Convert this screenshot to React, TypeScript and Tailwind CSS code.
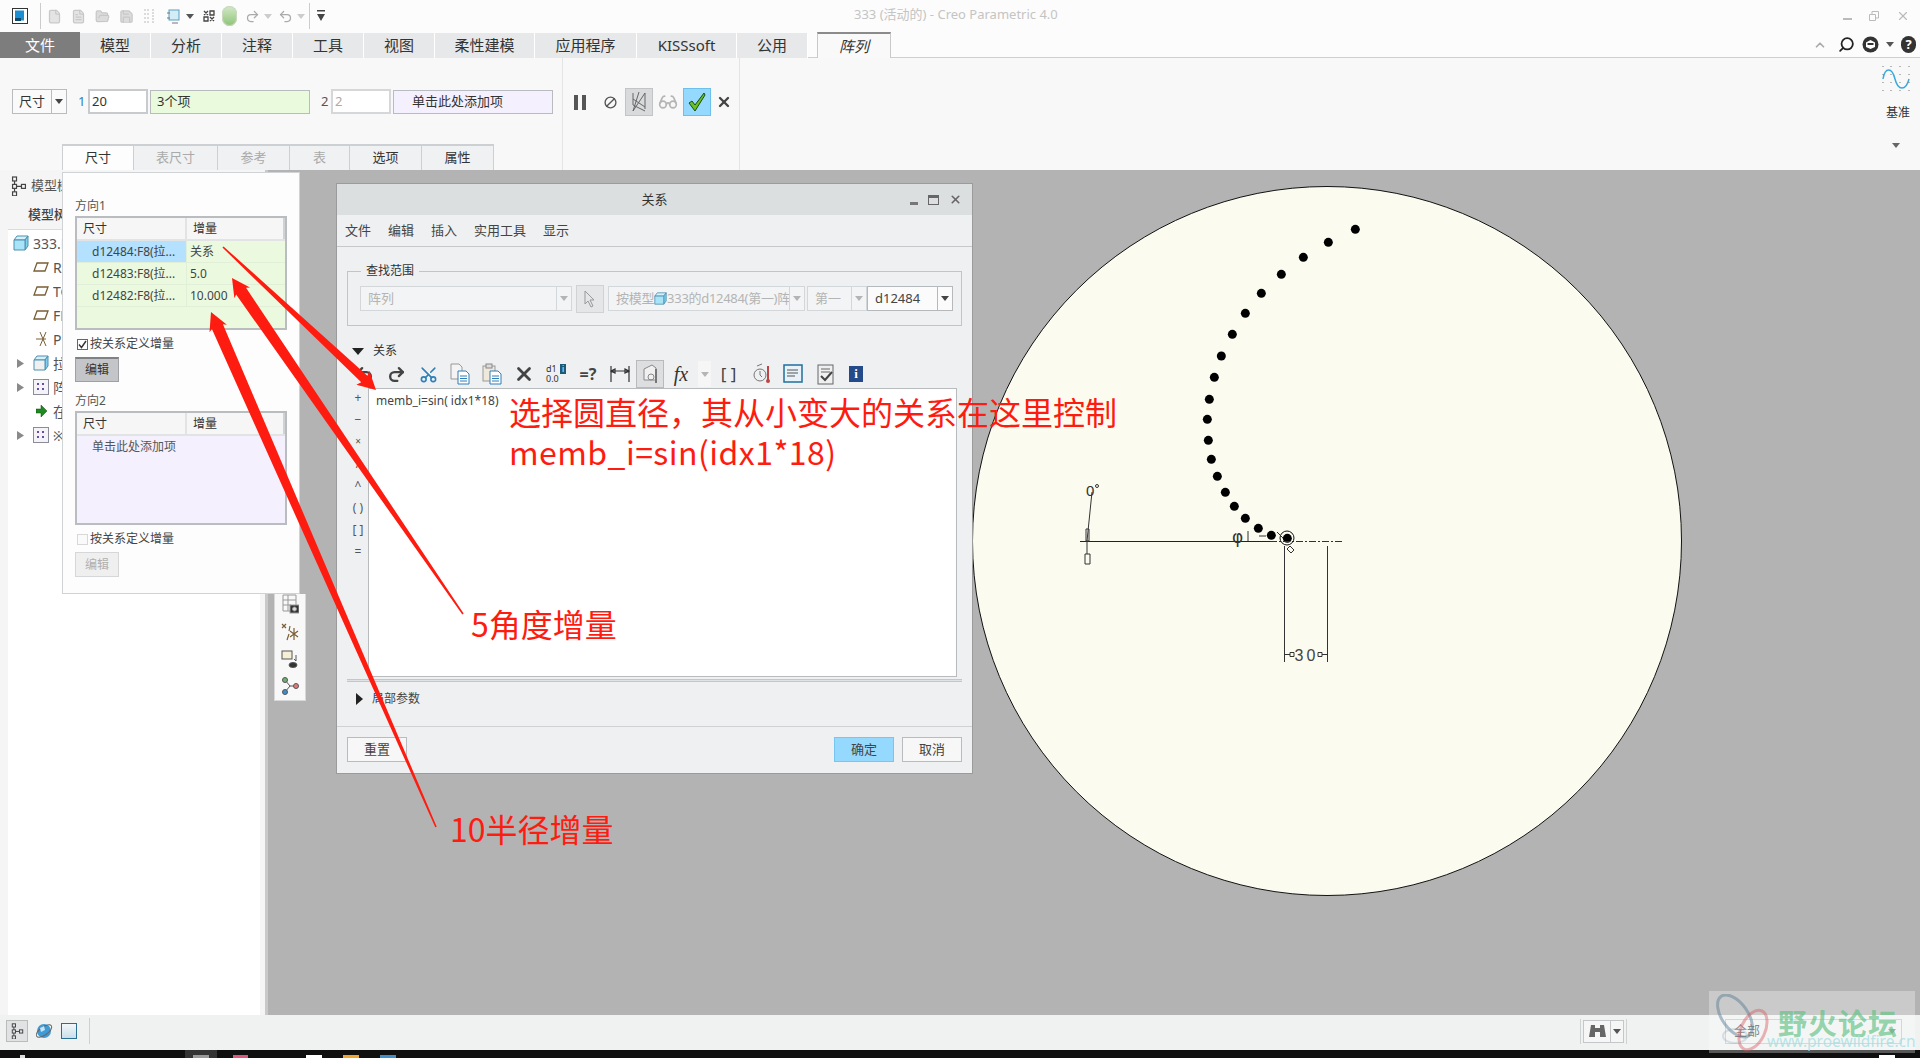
import { ReactNode } from "react";
import {
  Ban,
  ChevronUp,
  File,
  FileText,
  FolderOpen,
  Glasses,
  Redo2,
  Save,
  Scissors,
  Search,
  Undo2,
  X,
} from "lucide-react";

const dots = [
  [886, 88], [805, 127], [730, 172], [664, 223], [604, 280], [556, 340], [517, 403],
  [484, 468], [463, 532], [448, 598], [442, 658], [445, 721], [454, 778], [472, 829],
  [496, 877], [523, 919], [556, 955], [595, 985], [634, 1006], [682, 1015],
];

const tabs = [
  { label: "模型", w: "w-[71px]" },
  { label: "分析", w: "w-[71px]" },
  { label: "注释", w: "w-[71px]" },
  { label: "工具", w: "w-[71px]" },
  { label: "视图", w: "w-[71px]" },
  { label: "柔性建模", w: "w-[100px]" },
  { label: "应用程序", w: "w-[102px]" },
  { label: "KISSsoft", w: "w-[100px]" },
  { label: "公用", w: "w-[71px]" },
];

const subTabs = [
  { label: "尺寸", w: "w-[72px]", state: "active" },
  { label: "表尺寸", w: "w-[84px]", state: "off" },
  { label: "参考", w: "w-[72px]", state: "off" },
  { label: "表", w: "w-[60px]", state: "off" },
  { label: "选项", w: "w-[72px]", state: "on" },
  { label: "属性", w: "w-[72px]", state: "on" },
];

// tapered arrow, tip first then tail
const arrowPoints = (tx: number, ty: number, sx: number, sy: number, head: number, wing: number, neck: number) => {
  const len = Math.hypot(sx - tx, sy - ty);
  const ux = (sx - tx) / len;
  const uy = (sy - ty) / len;
  const nx = -uy;
  const ny = ux;
  const p = (along: number, side: number) => `${tx + ux * along + nx * side},${ty + uy * along + ny * side}`;
  return [p(0, 0), p(head, wing / 2), p(head - 2, neck / 2), p(len, 0.8), p(len, -0.8), p(head - 2, -neck / 2), p(head, -wing / 2)].join(" ");
};

const Tri = ({ className = "" }: { className?: string }) => (
  <svg width="8" height="5" viewBox="0 0 8 5" className={className}>
    <path d="M0 0h8L4 5z" fill="currentColor" />
  </svg>
);

const TreeGlyph = ({ size = 16 }: { size?: number }) => (
  <svg width={size} height={size * 1.3} viewBox="0 0 16 21" fill="none" stroke="#444" strokeWidth="1.2">
    <rect x="1.500" y="1" width="4" height="4" />
    <rect x="1.500" y="8.500" width="4" height="4" />
    <rect x="1.500" y="16" width="4" height="4" />
    <rect x="10.500" y="8.500" width="4" height="4" />
    <path d="M3.500 5v3.500M3.500 12.500V16M5.500 10.500h5" />
  </svg>
);

const PlaneGlyph = () => (
  <svg width="16" height="10" viewBox="0 0 16 10" fill="none" stroke="#7a5f35" strokeWidth="1.3">
    <path d="M4 1h11l-3 8H1z" />
  </svg>
);

const PatternGlyph = () => (
  <svg width="16" height="16" viewBox="0 0 16 16">
    <rect x="0.500" y="0.500" width="15" height="15" fill="#f4f4f8" stroke="#8b8b9a" />
    <path d="M4 4h2v2H4zM9 4h2v2H9zM4 9h2v2H4zM9 9h2v2H9z" fill="#6a4ca0" />
  </svg>
);

const CubeGlyph = ({ solid = false, size = 16 }: { solid?: boolean; size?: number }) => (
  <svg width={size} height={size} viewBox="0 0 16 16" stroke="#4d8fb0" strokeWidth="1" className="shrink-0">
    <path d="M1 5l3-4h11l-3 4z" fill="#d3f0fb" />
    <path d="M12 5l3-4v10l-3 4z" fill="#7fd0ee" />
    <path d="M1 5h11v10H1z" fill={solid ? "#f0f0f0" : "#a9e3f7"} />
  </svg>
);

const DocGlyph = ({ clip = false }: { clip?: boolean }) => (
  <svg width="20" height="22" viewBox="0 0 20 22" fill="none">
    {clip ? (
      <>
        <rect x="1" y="3" width="12" height="15" fill="#efe9dc" stroke="#999" />
        <rect x="4" y="1" width="6" height="4" fill="#ddd" stroke="#888" />
      </>
    ) : (
      <path d="M1 1h8l3 3v12H1z" fill="#f4f4f4" stroke="#999" />
    )}
    <path d="M8 8h8l3 3v10H8z" fill="#fff" stroke="#2f7fb8" />
    <path d="M10 13h7M10 15.500h7M10 18h7" stroke="#2f7fb8" />
  </svg>
);

const TreeRow = ({ icon, text, expand = false }: { icon: ReactNode; text: string; expand?: boolean }) => (
  <div className="flex h-[24px] items-center">
    <div className="flex w-[26px] justify-end pr-[2px]">
      {expand && (
        <svg width="7" height="9" viewBox="0 0 7 9">
          <path d="M0 0l7 4.500L0 9z" fill="#8a8a8a" />
        </svg>
      )}
    </div>
    <div className="ml-[5px] flex w-[20px] justify-center">{icon}</div>
    <span className="ml-[2px] w-[9px] overflow-hidden whitespace-nowrap text-[14px] text-[#555]">{text}</span>
  </div>
);

const Combo = ({ text, w, on = false }: { text: ReactNode; w: string; on?: boolean }) => (
  <div className={`flex h-[25px] ${w} border ${on ? "border-[#b5b9bb] bg-[#fbfbfb] text-[#444]" : "border-[#d4d7d9] bg-[#f3f4f5] text-[#b4b4b4]"} text-[13px]`}>
    <div className="flex min-w-0 flex-1 items-center overflow-hidden whitespace-nowrap pl-[7px]">{text}</div>
    <div className={`flex w-[15px] items-center justify-center border-l ${on ? "border-[#b5b9bb] text-[#444]" : "border-[#d4d7d9] text-[#b4b4b4]"}`}>
      <Tri />
    </div>
  </div>
);

const Dir = ({ title, rows, active }: { title: string; rows: ReactNode; active: boolean }) => (
  <div>
    <div className="h-[16px] text-[12px] leading-[16px] text-[#555]">{title}</div>
    <div className="mt-[2px] h-[114px] w-[212px] border-2 border-[#babdc0]">
      <div className="flex h-[23px] border-b-2 border-[#e1e3e4] bg-[#f6f6f6] text-[12px] leading-[21px] text-[#333]">
        <div className="w-[110px] border-r-2 border-[#e1e3e4] pl-[6px]">尺寸</div>
        <div className="flex-1 pl-[6px]">增量</div>
        <div className="w-[2px] bg-[#d0d2d4]" />
      </div>
      <div className={`h-[87px] ${active ? "bg-[#ebfadf]" : "bg-[#f4f0fe]"} text-[12px] text-[#444]`}>{rows}</div>
    </div>
    <div className="mt-[7px] flex h-[14px] items-center pl-[2px]">
      <span className={`flex h-[11px] w-[11px] items-center justify-center border ${active ? "border-[#666] bg-white" : "border-[#d8d8d8] bg-[#fafafa]"}`}>
        {active && (
          <svg width="9" height="9" viewBox="0 0 9 9" fill="none" stroke="#333" strokeWidth="1.4">
            <path d="M1 4.500l2.500 3L8 1" />
          </svg>
        )}
      </span>
      <span className="ml-[2px] text-[12px] leading-[14px] text-[#444]">按关系定义增量</span>
    </div>
    <div
      className={`mt-[6px] flex h-[25px] w-[44px] items-center justify-center border text-[12px] ${
        active ? "border-[#9fa0a3] border-t-2 border-t-[#808184] bg-[#c4c5c9] text-[#333]" : "border-[#d5d7d9] bg-[#efefef] text-[#b0b0b0]"
      }`}
    >
      编辑
    </div>
  </div>
);

const DimRow = ({ a, b, sel = false }: { a: string; b: string; sel?: boolean }) => (
  <div className="flex h-[22px] border-b border-[#e2efd8] leading-[21px]">
    <div className={`w-[110px] whitespace-nowrap border-r border-[#e2efd8] pl-[15px] ${sel ? "bg-[#b3e1ff]" : ""}`}>{a}</div>
    <div className="pl-[3px]">{b}</div>
  </div>
);

const ToolBtn = ({ children, w = "w-[32px]", active = false }: { children: ReactNode; w?: string; active?: boolean }) => (
  <div className={`flex h-[28px] ${w} shrink-0 items-center justify-center ${active ? "border border-[#b8babc] bg-[#dcdee0]" : ""}`}>{children}</div>
);

const DialogBtn = ({ text, primary = false }: { text: string; primary?: boolean }) => (
  <div className={`flex h-[25px] w-[60px] items-center justify-center border text-[13px] text-[#444] ${primary ? "border-[#77c6f2] bg-[#96d9ff]" : "border-[#b9bcbe] bg-[#f7f7f7]"}`}>
    {text}
  </div>
);

const App = () => {
  return (
    <div className="relative flex h-[1058px] w-[1920px] flex-col overflow-hidden bg-[#b3b3b3] font-['Noto_Sans','Noto_Sans_CJK_SC',sans-serif]">
      {/* title bar */}
      <div className="relative flex h-[32px] shrink-0 items-center bg-[#fcfcfc] pl-[12px]">
        <svg width="16" height="16" viewBox="0 0 16 16">
          <rect x="0.500" y="0.500" width="15" height="15" fill="#fff" stroke="#333" />
          <rect x="3" y="2.500" width="9" height="10" fill="#1b8fd2" />
          <rect x="3" y="10" width="6" height="3" fill="#0c4a70" />
        </svg>
        <div className="ml-[12px] h-[26px] w-px bg-[#ccc]" />
        <div className="ml-[6px] flex items-center gap-[9px] text-[#c8c8c8]">
          <File size={15} fill="#e4e4e4" />
          <FileText size={15} fill="#e4e4e4" />
          <FolderOpen size={15} fill="#dcdcdc" />
          <Save size={15} fill="#dcdcdc" />
          <svg width="14" height="16" viewBox="0 0 14 16" fill="none" stroke="#bbb" strokeDasharray="2 1">
            <path d="M1 2h5M1 6h5M1 10h5M1 14h5M10 1v14" />
          </svg>
          <svg width="16" height="16" viewBox="0 0 16 16" fill="none" stroke="#777">
            <rect x="3" y="2" width="10" height="10" fill="#d4ecf6" stroke="#5a9fc0" />
            <path d="M1 5h3M1 10h3M6 15h6" />
          </svg>
        </div>
        <Tri className="ml-[4px] text-[#555]" />
        <svg width="12" height="12" viewBox="0 0 12 12" className="ml-[9px]" fill="none" stroke="#444" strokeWidth="1.3">
          <path d="M1 1l4 4M5 1L1 5M7 7l4 4M11 7l-4 4M7 1h4v4H7zM1 7h4v4H1z" />
        </svg>
        <span className="ml-[7px] h-[20px] w-[15px] rounded-full bg-gradient-to-b from-[#d5e8ca] to-[#8cc474] shadow-[inset_0_0_0_1px_#c9d8c0]" />
        <Redo2 size={15} className="ml-[8px] text-[#aaa]" />
        <Tri className="ml-[4px] text-[#ccc]" />
        <Undo2 size={15} className="ml-[6px] text-[#aaa]" />
        <Tri className="ml-[4px] text-[#ccc]" />
        <div className="ml-[4px] h-[26px] w-px bg-[#ccc]" />
        <svg width="8" height="12" viewBox="0 0 8 12" className="ml-[7px]">
          <path d="M0 0h8v1.500H0zM0 4h8L4 11z" fill="#444" />
        </svg>
        <span className="absolute left-[854px] top-[5px] whitespace-nowrap text-[13px] text-[#c4c4c4]">333 (活动的) - Creo Parametric 4.0</span>
        <div className="ml-auto flex items-center gap-[16px] pr-[10px] text-[#bbb]">
          <span className="mt-[6px] h-[2px] w-[9px] bg-[#bbb]" />
          <svg width="12" height="12" viewBox="0 0 12 12" fill="none" stroke="#bbb">
            <path d="M1.500 4.500h6v6h-6zM4 4V1.500h6.500V8H8" />
          </svg>
          <X size={14} />
        </div>
      </div>

      {/* ribbon tabs */}
      <div className="flex h-[26px] shrink-0 bg-[#fcfcfc]">
        <div className="flex w-[80px] items-center justify-center bg-[#7d7d7d] text-[15px] text-white">文件</div>
        {tabs.map((t) => (
          <div key={t.label} className={`flex ${t.w} mt-px items-center justify-center border-r border-white bg-[#e6e8ea] text-[15px] text-[#333]`}>
            {t.label}
          </div>
        ))}
        <div className="w-[9px] border-b border-[#cfcfcf]" />
        <div className="flex w-[74px] items-center justify-center border-x border-t-2 border-[#c9c9c9] border-t-[#8b8b8b] bg-[#f9f9f9] text-[15px] italic text-[#333]">阵列</div>
        <div className="flex flex-1 items-center justify-end gap-[7px] border-b border-[#cfcfcf] pr-[4px] text-[#222]">
          <ChevronUp size={14} className="mr-[4px] text-[#aaa]" strokeWidth={3} />
          <Search size={17} strokeWidth={2.5} className="-scale-x-100" />
          <svg width="17" height="17" viewBox="0 0 17 17">
            <circle cx="8.500" cy="8.500" r="8" fill="#333" />
            <path d="M4 6.500L8.500 4 13 6.500V11l-4.500 2L4 11z" fill="#fff" />
            <path d="M5.500 7h6v2h-6z" fill="#333" />
          </svg>
          <Tri className="text-[#555]" />
          <span className="flex h-[17px] w-[15px] items-center justify-center rounded-full bg-[#333] text-[13px] font-bold leading-none text-white">?</span>
        </div>
      </div>

      {/* ribbon */}
      <div className="flex h-[112px] shrink-0 bg-[#f8f8f8]">
        <div className="flex w-[563px] flex-col border-r border-[#e4e4e4]">
          <div className="flex flex-1 items-center pl-[12px] pt-[1px]">
            <div className="flex h-[25px] w-[55px] border border-[#b9bcbe] bg-[#fafafa] text-[13px] text-[#333]">
              <div className="flex w-[39px] items-center justify-center border-r border-[#b9bcbe]">尺寸</div>
              <div className="flex flex-1 items-center justify-center text-[#444]">
                <Tri />
              </div>
            </div>
            <span className="ml-[11px] w-[10px] text-[13px] text-[#2f7fb8]">1</span>
            <div className="flex h-[25px] w-[60px] items-center border-2 border-[#c8cbcd] bg-white pl-[2px] text-[13px] text-[#333]">20</div>
            <div className="ml-[2px] flex h-[24px] w-[160px] items-center border border-[#b9bcbe] bg-[#e9fbdc] pl-[6px] text-[13px] text-[#333]">3个项</div>
            <span className="ml-[11px] w-[10px] text-[13px] text-[#555]">2</span>
            <div className="flex h-[25px] w-[60px] items-center border-2 border-[#d5d7d9] bg-white pl-[2px] text-[13px] text-[#aaa]">2</div>
            <div className="ml-[2px] flex h-[24px] w-[160px] items-center border border-[#b9bcbe] bg-[#f4f0fe] pl-[18px] text-[13px] text-[#333]">单击此处添加项</div>
          </div>
          <div className="flex h-[26px] pl-[62px]">
            {subTabs.map((t) => (
              <div
                key={t.label}
                className={`flex ${t.w} items-center justify-center border-r border-t-2 border-[#ccd0d2] text-[13px] ${
                  t.state === "active"
                    ? "border-l bg-[#fdfdfd] text-[#333]"
                    : t.state === "off"
                      ? "bg-[#f0f1f2] text-[#aaa]"
                      : "bg-[#f0f1f2] text-[#333]"
                }`}
              >
                {t.label}
              </div>
            ))}
          </div>
        </div>
        <div className="flex w-[177px] items-start border-r border-[#e4e4e4] pl-[11px] pt-[30px]">
          <div className="flex h-[28px] items-center">
            <svg width="12" height="15" viewBox="0 0 12 15">
              <path d="M0 0h4v15H0zM8 0h4v15H8z" fill="#555" />
            </svg>
            <Ban size={13} strokeWidth={2.5} className="ml-[18px] -scale-x-100 text-[#555]" />
            <div className="ml-[8px] flex h-[28px] w-[28px] items-center justify-center border border-[#c2c4c5] bg-[#d9dadb]">
              <svg width="20" height="22" viewBox="0 0 20 22" fill="none" stroke="#666" strokeWidth="1">
                <path d="M4 2v12l12 6M10 1l-6 19M16 2L4 20M4 8l12 8M16 2v16" />
              </svg>
            </div>
            <Glasses size={20} className="ml-[5px] text-[#b5b5b5]" />
            <div className="ml-[5px] flex h-[28px] w-[28px] items-center justify-center border border-[#6cc0ee] bg-[#96d9ff]">
              <svg width="20" height="20" viewBox="0 0 20 20">
                <path d="M2 11l3-2 3 4 9-12 1 2-10 16z" fill="#6cbf1f" stroke="#155015" strokeWidth="1" />
              </svg>
            </div>
            <X size={16} strokeWidth={3.5} className="ml-[5px] text-[#444]" />
          </div>
        </div>
        <div className="flex flex-1 flex-col items-end pr-[10px] pt-[8px]">
          <svg width="28" height="26" viewBox="0 0 28 26" fill="none">
            <path d="M1 13C3 1 10 1 13 13s11 12 14 0" stroke="#3aa9dc" strokeWidth="1.500" />
            <path d="M1 0v26M9 0v26M18 0v26M27 0v26" stroke="#777" strokeWidth="1" strokeDasharray="1 7" />
          </svg>
          <span className="mt-[13px] text-[12px] leading-[16px] text-[#333]">基准</span>
          <Tri className="mr-[10px] mt-[22px] text-[#666]" />
        </div>
      </div>

      {/* main */}
      <div className="flex min-h-0 flex-1">
        <div className="flex w-[268px] shrink-0 flex-col border-r-[3px] border-[#c9c9c9] bg-[#f5f5f5]">
          <div className="flex h-[30px] items-center pl-[11px] pt-[2px]">
            <TreeGlyph />
            <span className="ml-[4px] w-[31px] overflow-hidden whitespace-nowrap text-[13px] text-[#555]">模型树</span>
          </div>
          <div className="h-[29px] w-[62px] overflow-hidden whitespace-nowrap pl-[28px] text-[13px] font-medium leading-[28px] text-[#444]">模型树</div>
          <div className="ml-[8px] mr-[5px] flex-1 border-t border-[#dcdcdc] bg-white pb-[5px]">
            <div className="-ml-[8px] pt-[1px]">
              <div className="flex h-[24px] items-center pl-[13px]">
                <CubeGlyph />
                <span className="ml-[4px] w-[29px] overflow-hidden whitespace-nowrap text-[14px] text-[#555]">333.PRT</span>
              </div>
              <TreeRow icon={<PlaneGlyph />} text="RIGHT" />
              <TreeRow icon={<PlaneGlyph />} text="TOP" />
              <TreeRow icon={<PlaneGlyph />} text="FRONT" />
              <TreeRow
                icon={
                  <svg width="17" height="16" viewBox="0 0 17 16" fill="none" stroke="#7a5f35">
                    <path d="M7 1l6 14M13 1L7 15M3 8h10" />
                  </svg>
                }
                text="PRT_CSYS"
              />
              <TreeRow icon={<CubeGlyph solid />} text="拉伸 1" expand />
              <TreeRow icon={<PatternGlyph />} text="阵列 1" expand />
              <TreeRow
                icon={
                  <svg width="11" height="12" viewBox="0 0 11 12">
                    <path d="M0 4h5V0l6 6-6 6V8H0z" fill="#1c8a1c" stroke="#0c4d0c" strokeWidth="0.5" />
                  </svg>
                }
                text="在此插入"
              />
              <TreeRow icon={<PatternGlyph />} text="※" expand />
            </div>
          </div>
        </div>
        <div className="min-w-0 flex-1">
          <svg width="1652" height="845" viewBox="268 170 1652 845">
            <circle cx="1327" cy="541" r="354.500" fill="#fbfcef" stroke="#111" strokeWidth="1" />
            {dots.map(([x, y]) => (
              <circle key={`${x}-${y}`} cx={1060 + x / 3} cy={200 + y / 3} r="4.500" fill="#000" />
            ))}
            <path d="M1080 541.500H1270" stroke="#222" strokeWidth="1" />
            <path d="M1270 541.500H1342" stroke="#2222aa" strokeWidth="1" strokeDasharray="7 2 2 2" />
            <circle cx="1287" cy="538" r="7" fill="none" stroke="#111" />
            <path d="M1248 531v10M1259 536h7M1277 532l6 6M1290 546l4 4-3 3-4-4z" stroke="#333" fill="none" />
            <path d="M1284.500 546v116M1327.500 546v116M1284.500 654.500h6M1322 654.500h5" stroke="#333" fill="none" />
            <path d="M1290 652.500h4v4h-4zM1318 652.500h4v4h-4z" fill="#fbfcef" stroke="#333" />
            <text x="1306.500" y="661" textAnchor="middle" fontSize="16" letterSpacing="3" fill="#444" fontFamily="Liberation Sans">30</text>
            <path d="M1092 492l-5 49M1087 541v13M1085 554h5v10h-5zM1086 529h3v12h-3z" stroke="#333" fill="none" />
            <text x="1086" y="496" fontSize="15" fill="#333" fontFamily="Liberation Sans">0</text>
            <circle cx="1097" cy="486" r="1.500" fill="none" stroke="#333" />
            <text x="1232" y="543" fontSize="17" fill="#333" fontFamily="DejaVu Sans">φ</text>
          </svg>
        </div>
      </div>

      {/* status bar */}
      <div className="flex h-[35px] shrink-0 items-center bg-[#f0f2f2] pb-[3px] pl-[6px]">
        <div className="flex h-[22px] w-[22px] items-center justify-center border border-[#bbb] bg-[#e0e2e3]">
          <TreeGlyph size={13} />
        </div>
        <svg width="18" height="18" viewBox="0 0 18 18" className="ml-[7px]">
          <circle cx="9" cy="9" r="7" fill="#3f9ad6" />
          <ellipse cx="9" cy="9" rx="9" ry="4" fill="none" stroke="#666" transform="rotate(-35 9 9)" />
          <path d="M5 6l4-2 1 4-4 2z" fill="#bfe6fb" />
        </svg>
        <div className="ml-[8px] h-[16px] w-[16px] border border-[#2a6f92] bg-gradient-to-b from-[#f3f8fa] to-[#c9dfe9]" />
        <div className="ml-[12px] h-[26px] w-px bg-[#cdd0d1]" />
        <div className="ml-auto flex h-[25px] w-[47px] items-center border-x border-[#cfd2d3] px-[2px]">
          <div className="flex h-[23px] w-[42px] border border-[#c4c7c8] bg-[#f6f6f6]">
            <div className="flex w-[27px] items-center justify-center border-r border-[#c4c7c8]">
              <svg width="17" height="15" viewBox="0 0 17 15">
                <path d="M2 1h4v3h5V1h4l2 12h-6V8H6v5H0z" fill="#666" />
              </svg>
            </div>
            <div className="flex flex-1 items-center justify-center text-[#555]">
              <Tri />
            </div>
          </div>
        </div>
        <div className="ml-[98px] mr-[18px] flex h-[25px] w-[177px] items-center justify-between border border-[#c4c7c8] pl-[8px] pr-[5px] text-[13px] text-[#555]">
          全部
          <Tri className="text-[#888]" />
        </div>
      </div>

      {/* taskbar sliver */}
      <div className="flex h-[8px] shrink-0 bg-[#0f0f0f]">
        <div className="ml-[20px] mt-[5px] h-[3px] w-[5px] bg-[#ddd]" />
        <div className="ml-[160px] flex h-[8px] w-[32px] justify-center bg-[#333]">
          <div className="mt-[5px] h-[3px] w-[16px] bg-[#999]" />
        </div>
        <div className="ml-[16px] mt-[5px] h-[3px] w-[15px] bg-[#e0567a]" />
        <div className="ml-[58px] mt-[5px] h-[3px] w-[16px] bg-white" />
        <div className="ml-[21px] mt-[5px] h-[3px] w-[16px] bg-[#f0a52c]" />
        <div className="ml-[21px] mt-[5px] h-[3px] w-[16px] bg-[#3f8ec9]" />
        <div className="ml-[1483px] mt-[5px] h-[3px] w-[16px] bg-white" />
      </div>

      {/* slide-up panel */}
      <div className="absolute left-[62px] top-[172px] h-[422px] w-[238px] border border-[#cfd3d5] bg-[#fdfdfd] pl-[12px] pt-[25px]">
        <Dir
          title="方向1"
          active
          rows={
            <>
              <DimRow sel a="d12484:F8(拉..." b="关系" />
              <DimRow a="d12483:F8(拉..." b="5.0" />
              <DimRow a="d12482:F8(拉..." b="10.000" />
            </>
          }
        />
        <div className="mt-[11px]">
          <Dir title="方向2" active={false} rows={<div className="pl-[15px] pt-[2px] text-[#555]">单击此处添加项</div>} />
        </div>
      </div>

      {/* vertical strip under the panel */}
      <div className="absolute left-[274px] top-[594px] flex h-[107px] w-[32px] flex-col items-center justify-end gap-[9px] border border-t-0 border-[#d8d8d8] bg-[#f8f8f8] pb-[5px]">
        <svg width="17" height="20" viewBox="0 0 17 20" fill="none" stroke="#999">
          <path d="M1 1h13v16H1zM1 6h13M1 11h8M6 1v16" />
          <rect x="8" y="11" width="9" height="8" fill="#333" />
          <circle cx="12.500" cy="15" r="2" fill="#ddd" />
        </svg>
        <svg width="18" height="18" viewBox="0 0 18 18" fill="none" stroke="#7a5f35" strokeWidth="1.2">
          <path d="M1 1l4 4M5 1L1 5M9 3l-1 5M8 11l-2 6M13 5v12M9 8l8 6M17 8l-8 6" />
        </svg>
        <svg width="18" height="18" viewBox="0 0 18 18" fill="none" stroke="#555">
          <rect x="1" y="1" width="10" height="8" fill="#f6efd8" />
          <path d="M15 5v6l-2-2" />
          <ellipse cx="12" cy="15" rx="4" ry="2.500" fill="#333" />
        </svg>
        <svg width="18" height="18" viewBox="0 0 18 18" stroke="#555">
          <path d="M4 3l5 6-5 6M9 9h7" fill="none" />
          <circle cx="4" cy="3" r="2.500" fill="#6fae6f" />
          <circle cx="15" cy="9" r="2.500" fill="#e07a7a" />
          <circle cx="4" cy="15" r="2.500" fill="#3f8ec9" />
        </svg>
      </div>

      {/* relations dialog */}
      <div className="absolute left-[336px] top-[183px] flex h-[591px] w-[637px] flex-col border border-[#9b9b9b] bg-[#eef0f2]">
        <div className="relative flex h-[31px] shrink-0 items-center justify-center bg-[#dcdfe0] text-[13px] text-[#333]">
          关系
          <div className="absolute right-[10px] top-[9px] flex items-center gap-[10px] text-[#666]">
            <span className="mt-[8px] h-[3px] w-[8px] bg-[#777]" />
            <span className="h-[10px] w-[11px] border border-t-[3px] border-[#666]" />
            <X size={13} strokeWidth={3} />
          </div>
        </div>
        <div className="flex h-[32px] shrink-0 items-center gap-[17px] border-b border-[#c6c9cb] pl-[8px] text-[13px] text-[#444]">
          <span>文件</span>
          <span>编辑</span>
          <span>插入</span>
          <span>实用工具</span>
          <span>显示</span>
        </div>
        <div className="relative mx-[10px] mt-[24px] flex h-[55px] shrink-0 items-center gap-[4px] border border-[#c2c5c7] pl-[12px]">
          <span className="absolute -top-[9px] left-[13px] bg-[#eef0f2] px-[5px] text-[12px] leading-[16px] text-[#333]">查找范围</span>
          <Combo text="阵列" w="w-[212px]" />
          <div className="flex h-[28px] w-[28px] items-center justify-center border border-[#d0d2d4] bg-[#e4e6e8]">
            <svg width="12" height="18" viewBox="0 0 12 18" fill="none" stroke="#999">
              <path d="M1 1v13l3-3 3 6 2-1-3-6h4z" />
            </svg>
          </div>
          <Combo
            w="w-[197px]"
            text={
              <span className="flex items-center tracking-[-0.3px]">
                按模型
                <CubeGlyph size={13} />
                333的d12484(第一)阵
              </span>
            }
          />
          <div className="-ml-[2px] flex">
            <Combo text="第一" w="w-[60px]" />
            <Combo text="d12484" w="w-[86px]" on />
          </div>
        </div>
        <div className="ml-[15px] mt-[16px] flex h-[18px] shrink-0 items-center">
          <svg width="12" height="7" viewBox="0 0 12 7">
            <path d="M0 0h12L6 7z" fill="#222" />
          </svg>
          <span className="ml-[9px] text-[12px] leading-[16px] text-[#333]">关系</span>
        </div>
        <div className="flex h-[28px] shrink-0 items-center pl-[11px] text-[#444]">
          <ToolBtn>
            <Undo2 size={19} strokeWidth={3} />
          </ToolBtn>
          <ToolBtn>
            <Redo2 size={19} strokeWidth={3} />
          </ToolBtn>
          <ToolBtn>
            <Scissors size={19} className="-rotate-90 text-[#2f7fb8]" />
          </ToolBtn>
          <ToolBtn>
            <DocGlyph />
          </ToolBtn>
          <ToolBtn>
            <DocGlyph clip />
          </ToolBtn>
          <ToolBtn>
            <X size={22} strokeWidth={3} />
          </ToolBtn>
          <ToolBtn>
            <div className="relative h-[20px] w-[20px] text-[9px] leading-[10px] text-[#333]">
              d1
              <br />
              0.0
              <span className="absolute right-0 top-0 flex h-[10px] w-[6px] items-center justify-center bg-[#1c5a7a] text-[8px] text-white">i</span>
            </div>
          </ToolBtn>
          <ToolBtn>
            <span className="text-[16px] font-bold text-[#444]">=?</span>
          </ToolBtn>
          <ToolBtn>
            <svg width="20" height="16" viewBox="0 0 20 16" fill="none" stroke="#333" strokeWidth="1.2">
              <path d="M1 0v16M19 0v16M1 5h18M1 5l4-2v4zM19 5l-4-2v4z" />
            </svg>
          </ToolBtn>
          <ToolBtn active w="w-[28px]">
            <svg width="20" height="22" viewBox="0 0 20 22" fill="none" stroke="#888">
              <path d="M4 6l8-4 4 3v12H4z" fill="#f0f0f0" />
              <circle cx="11" cy="14" r="3" />
              <path d="M16 6v14" stroke="#777" strokeWidth="2" />
            </svg>
          </ToolBtn>
          <ToolBtn w="w-[34px]">
            <span className="font-['Liberation_Serif',serif] text-[20px] italic text-[#333]">fx</span>
          </ToolBtn>
          <div className="flex h-[26px] w-[13px] shrink-0 items-center justify-center bg-[#f6f6f6] text-[#b5b5b5]">
            <Tri />
          </div>
          <ToolBtn w="w-[35px]">
            <span className="text-[17px] text-[#444]">[ ]</span>
          </ToolBtn>
          <ToolBtn>
            <svg width="20" height="22" viewBox="0 0 20 22" fill="none" stroke="#777">
              <circle cx="8" cy="12" r="6" />
              <path d="M5 3l5-2M8 8v4l2 2" />
              <path d="M16 3v14" stroke="#b44" strokeWidth="2" />
              <circle cx="16" cy="18" r="2" fill="#b44" stroke="none" />
            </svg>
          </ToolBtn>
          <ToolBtn>
            <svg width="22" height="22" viewBox="0 0 22 22" fill="none" stroke="#555">
              <rect x="1" y="2" width="18" height="17" fill="#e8f2f8" stroke="#1f6f9a" strokeWidth="1.500" />
              <path d="M4 7h11M4 10h11M4 13h8" />
            </svg>
          </ToolBtn>
          <ToolBtn>
            <svg width="20" height="22" viewBox="0 0 20 22" fill="none" stroke="#666">
              <rect x="2" y="2" width="15" height="19" fill="#f0f0f0" />
              <path d="M5 6h9M5 9h9" />
              <path d="M5 13l4 4 7-8" stroke="#444" strokeWidth="2" />
            </svg>
          </ToolBtn>
          <ToolBtn w="w-[28px]">
            <span className="flex h-[16px] w-[14px] items-center justify-center bg-[#254a8a] font-['Liberation_Serif',serif] text-[13px] font-bold text-white">i</span>
          </ToolBtn>
        </div>
        <div className="flex h-[289px] shrink-0">
          <div className="flex w-[31px] shrink-0 flex-col items-center gap-[5px] pl-[11px] pt-[1px] text-[12px] leading-[17px] text-[#555]">
            <span>+</span>
            <span>−</span>
            <span className="text-[10px]">×</span>
            <span>/</span>
            <span>^</span>
            <span className="whitespace-nowrap">( )</span>
            <span className="whitespace-nowrap">[ ]</span>
            <span>=</span>
          </div>
          <div className="mr-[15px] flex-1 border border-[#b8bbbd] bg-white pl-[7px] pt-[3px] text-[12px] leading-[18px] text-[#444]">memb_i=sin( idx1*18)</div>
        </div>
        <div className="mx-[10px] mt-[2px] h-[3px] shrink-0 border-y border-[#c4c7c9] bg-[#dfe2e3]" />
        <div className="flex h-[45px] shrink-0 items-center border-b border-[#cfd2d4] pb-[10px] pl-[19px]">
          <svg width="7" height="12" viewBox="0 0 7 12">
            <path d="M0 0l7 6-7 6z" fill="#222" />
          </svg>
          <span className="ml-[9px] text-[12px] leading-[16px] text-[#444]">局部参数</span>
        </div>
        <div className="flex flex-1 items-start justify-between px-[10px] pt-[10px]">
          <DialogBtn text="重置" />
          <div className="flex gap-[8px]">
            <DialogBtn text="确定" primary />
            <DialogBtn text="取消" />
          </div>
        </div>
      </div>

      {/* red notes on top */}
      <svg width="1920" height="1058" viewBox="0 0 1920 1058" className="pointer-events-none absolute left-0 top-0">
        <polygon points={arrowPoints(376, 390, 223, 247, 18, 19, 9)} fill="#fe1c10" />
        <polygon points={arrowPoints(232, 278, 463, 614, 18, 19, 12)} fill="#fe1c10" />
        <polygon points={arrowPoints(211, 312, 436, 827, 18, 19, 12)} fill="#fe1c10" />
      </svg>
      <div className="absolute left-[509px] top-[391px] whitespace-nowrap font-['Noto_Sans_CJK_SC',sans-serif] text-[32px] leading-[40px] text-[#fe1c10]">
        选择圆直径，其从小变大的关系在这里控制
        <br />
        <span className="tracking-[0.45px]">memb_i=sin(idx1*18)</span>
      </div>
      <div className="absolute left-[471px] top-[602px] whitespace-nowrap font-['Noto_Sans_CJK_SC',sans-serif] text-[32px] leading-[42px] text-[#fe1c10]">5角度增量</div>
      <div className="absolute left-[450px] top-[807px] whitespace-nowrap font-['Noto_Sans_CJK_SC',sans-serif] text-[32px] leading-[42px] text-[#fe1c10]">10半径增量</div>

      {/* forum watermark */}
      <div className="absolute left-[1709px] top-[991px] h-[62px] w-[206px] bg-white/30">
        <svg width="60" height="58" viewBox="0 0 60 58" className="absolute left-[2px] top-[3px]" fill="none">
          <ellipse cx="24" cy="22" rx="13" ry="24" transform="rotate(-35 24 22)" stroke="#5d7f96" strokeWidth="3" opacity="0.5" />
          <ellipse cx="42" cy="36" rx="12" ry="21" transform="rotate(25 42 36)" stroke="#d65a62" strokeWidth="3" opacity="0.45" />
          <ellipse cx="24" cy="42" rx="12" ry="7" stroke="#8fa6b4" strokeWidth="2" opacity="0.3" />
        </svg>
        <span className="absolute left-[69px] top-[14px] whitespace-nowrap font-['Noto_Sans_CJK_SC',serif] text-[29px] font-bold leading-[34px] tracking-[1px] text-[#5cbf80]/65">野火论坛</span>
        <span className="absolute left-[58px] top-[40px] whitespace-nowrap font-['Noto_Sans',sans-serif] text-[15.500px] leading-[20px] text-[#a8dde0]/80">www.proewildfire.cn</span>
      </div>
    </div>
  );
};

export default App;
